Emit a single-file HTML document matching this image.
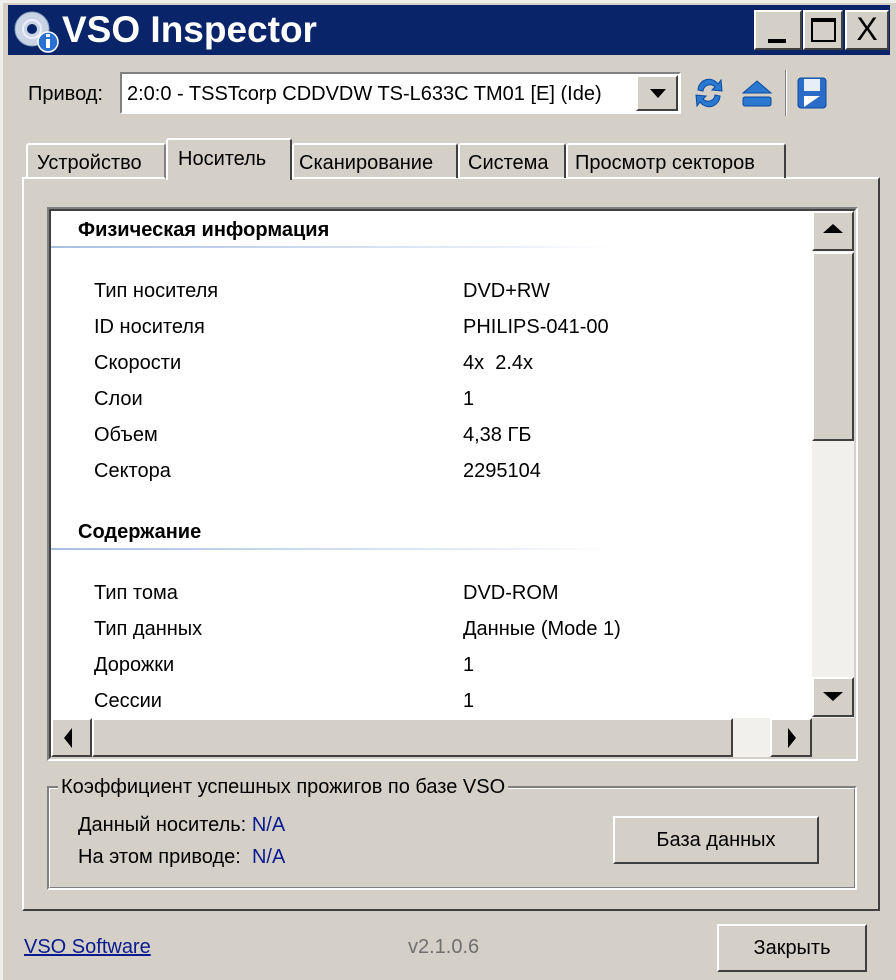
<!DOCTYPE html>
<html><head><meta charset="utf-8"><style>
*{margin:0;padding:0;box-sizing:border-box}
body{width:896px;height:980px;background:#d4d0c8;position:relative;overflow:hidden;font-family:"Liberation Sans",sans-serif;font-size:20px;color:#000}
.a{position:absolute;white-space:nowrap}
.rz{border:2px solid;border-color:#fff #404040 #404040 #fff;background:#d4d0c8}
.sk{border:2px solid;border-color:#808080 #fff #fff #808080}
</style></head><body>
<div class="a" style="left:0;top:0;width:896px;height:980px;border-left:3px solid #f0eee8;border-top:3px solid #f0eee8"></div>
<div class="a" style="left:8px;top:5px;width:882px;height:50px;background:#0a246a"></div>
<svg class="a" style="left:10px;top:8px" width="50" height="46" viewBox="0 0 50 46">
<circle cx="22" cy="21" r="17" fill="#c8d4e4" stroke="#8aa0c0"/><circle cx="22" cy="21" r="5" fill="#0a246a"/><circle cx="22" cy="21" r="9" fill="none" stroke="#eef" stroke-width="2"/>
<circle cx="38" cy="34" r="10" fill="#2a70d0" stroke="#fff" stroke-width="1.5"/><rect x="36" y="31" width="4" height="9" fill="#fff"/><rect x="36" y="26" width="4" height="3" fill="#fff"/></svg>
<div class="a" style="left:62px;top:8px;color:#fff;font-weight:bold;font-size:37px;line-height:44px">VSO Inspector</div>
<div class="a rz" style="left:754px;top:10px;width:48px;height:40px"><div class="a" style="left:12px;top:27px;width:18px;height:4px;background:#000"></div></div>
<div class="a rz" style="left:803px;top:10px;width:40px;height:40px"><div class="a" style="left:6px;top:6px;width:25px;height:24px;border:2px solid #000;border-top-width:4px"></div></div>
<div class="a rz" style="left:845px;top:10px;width:44px;height:40px;font-size:32px;line-height:34px;text-align:center">X</div>
<div class="a" style="left:28px;top:82px;line-height:24px">Привод:</div>
<div class="a sk" style="left:120px;top:72px;width:561px;height:42px;background:#fff"></div>
<div class="a" style="left:127px;top:82px;line-height:24px">2:0:0 - TSSTcorp CDDVDW TS-L633C TM01 [E] (Ide)</div>
<div class="a rz" style="left:636px;top:75px;width:42px;height:36px"><div class="a" style="left:12px;top:12px;border-left:8px solid transparent;border-right:8px solid transparent;border-top:9px solid #000"></div></div>
<svg class="a" style="left:692px;top:74px" width="34" height="38" viewBox="0 0 34 38"><path d="M6 16 A11 11 0 0 1 26 10 L29 6 L30 17 L20 16 L23 13 A7 7 0 0 0 11 17Z" fill="#2a78d0" stroke="#0a4aa0"/><path d="M28 22 A11 11 0 0 1 8 28 L5 32 L4 21 L14 22 L11 25 A7 7 0 0 0 23 21Z" fill="#2a78d0" stroke="#0a4aa0"/></svg>
<svg class="a" style="left:740px;top:78px" width="34" height="32" viewBox="0 0 34 32"><path d="M3 15 L17 3 L31 15Z" fill="#2a78d0" stroke="#0a4aa0"/><rect x="3" y="19" width="28" height="9" rx="2" fill="#2a78d0" stroke="#0a4aa0"/></svg>
<div class="a" style="left:785px;top:70px;width:2px;height:46px;background:#808080;border-right:1px solid #fff"></div>
<svg class="a" style="left:796px;top:76px" width="32" height="34" viewBox="0 0 32 34"><rect x="2" y="2" width="28" height="30" rx="3" fill="#2a6cc8" stroke="#0a4aa0"/><rect x="8" y="3" width="16" height="12" fill="#e8eef8"/><rect x="8" y="20" width="16" height="11" fill="#fff"/><path d="M8 31 L24 20 L24 31Z" fill="#2a6cc8"/></svg>
<div class="a" style="left:22px;top:177px;width:858px;height:734px;border:2px solid;border-color:#fff #404040 #404040 #fff"></div>
<div class="a" style="left:26px;top:143px;width:140px;height:36px;border:2px solid;border-color:#fff #808080 transparent #fff;border-radius:3px 3px 0 0"></div>
<div class="a" style="left:37px;top:152px">Устройство</div>
<div class="a" style="left:166px;top:138px;width:126px;height:42px;border:2px solid;border-color:#fff #404040 transparent #fff;border-bottom:none;background:#d4d0c8;border-radius:3px 3px 0 0"></div>
<div class="a" style="left:178px;top:148px">Носитель</div>
<div class="a" style="left:292px;top:143px;width:166px;height:35px;border:2px solid;border-color:#fff #404040 transparent #fff;border-bottom:none;border-radius:3px 3px 0 0"></div>
<div class="a" style="left:299px;top:152px">Сканирование</div>
<div class="a" style="left:458px;top:143px;width:108px;height:35px;border:2px solid;border-color:#fff #404040 transparent #fff;border-bottom:none;border-radius:3px 3px 0 0"></div>
<div class="a" style="left:468px;top:152px">Система</div>
<div class="a" style="left:566px;top:143px;width:220px;height:35px;border:2px solid;border-color:#fff #404040 transparent #fff;border-bottom:none;border-radius:3px 3px 0 0"></div>
<div class="a" style="left:575px;top:152px">Просмотр секторов</div>
<div class="a" style="left:47px;top:207px;width:811px;height:554px;border:2px solid;border-color:#808080 #fff #fff #808080"></div>
<div class="a" style="left:49px;top:209px;width:807px;height:550px;border:2px solid;border-color:#404040 #d4d0c8 #d4d0c8 #404040;background:#fff"></div>
<div class="a" style="left:78px;top:219px;font-weight:bold">Физическая информация</div>
<div class="a" style="left:51px;top:246px;width:560px;height:2px;background:linear-gradient(90deg,#a8c0e0,#e8eef8 80%,#fff)"></div>
<div class="a" style="left:94px;top:273px;line-height:36px">Тип носителя<br>ID носителя<br>Скорости<br>Слои<br>Объем<br>Сектора</div>
<div class="a" style="left:463px;top:273px;line-height:36px">DVD+RW<br>PHILIPS-041-00<br>4x&nbsp; 2.4x<br>1<br>4,38 ГБ<br>2295104</div>
<div class="a" style="left:78px;top:521px;font-weight:bold">Содержание</div>
<div class="a" style="left:51px;top:548px;width:560px;height:2px;background:linear-gradient(90deg,#a8c0e0,#e8eef8 80%,#fff)"></div>
<div class="a" style="left:94px;top:575px;line-height:36px">Тип тома<br>Тип данных<br>Дорожки<br>Сессии</div>
<div class="a" style="left:463px;top:575px;line-height:36px">DVD-ROM<br>Данные (Mode 1)<br>1<br>1</div>
<div class="a" style="left:812px;top:211px;width:42px;height:508px;background:#f2f0ec"></div>
<div class="a rz" style="left:812px;top:211px;width:42px;height:40px"><div class="a" style="left:9px;top:11px;border-left:10px solid transparent;border-right:10px solid transparent;border-bottom:9px solid #000"></div></div>
<div class="a rz" style="left:812px;top:252px;width:42px;height:189px"></div>
<div class="a rz" style="left:812px;top:677px;width:42px;height:40px"><div class="a" style="left:9px;top:13px;border-left:10px solid transparent;border-right:10px solid transparent;border-top:9px solid #000"></div></div>
<div class="a" style="left:51px;top:718px;width:761px;height:39px;background:#f2f0ec"></div>
<div class="a rz" style="left:51px;top:718px;width:41px;height:39px"><div class="a" style="left:11px;top:8px;border-top:10px solid transparent;border-bottom:10px solid transparent;border-right:8px solid #000"></div></div>
<div class="a rz" style="left:92px;top:718px;width:641px;height:39px"></div>
<div class="a rz" style="left:770px;top:718px;width:42px;height:39px"><div class="a" style="left:16px;top:8px;border-top:10px solid transparent;border-bottom:10px solid transparent;border-left:8px solid #000"></div></div>
<div class="a" style="left:812px;top:718px;width:42px;height:39px;background:#d4d0c8"></div>
<div class="a" style="left:47px;top:786px;width:810px;height:104px;border:2px solid;border-color:#808080 #fff #fff #808080"></div>
<div class="a" style="left:49px;top:788px;width:806px;height:100px;border:1px solid;border-color:#fff #808080 #808080 #fff"></div>
<div class="a" style="left:58px;top:776px;background:#d4d0c8;padding:0 3px">Коэффициент успешных прожигов по базе VSO</div>
<div class="a" style="left:78px;top:814px">Данный носитель: <span style="color:#0a1a90">N/A</span></div>
<div class="a" style="left:78px;top:846px">На этом приводе:&nbsp; <span style="color:#0a1a90">N/A</span></div>
<div class="a" style="left:613px;top:816px;width:206px;height:48px;border:2px solid;border-color:#fff #404040 #404040 #fff;text-align:center;line-height:44px">База данных</div>
<div class="a" style="left:24px;top:936px;color:#0a1a90;text-decoration:underline">VSO Software</div>
<div class="a" style="left:408px;top:936px;color:#707070">v2.1.0.6</div>
<div class="a" style="left:717px;top:924px;width:150px;height:48px;border:2px solid;border-color:#fff #404040 #404040 #fff;text-align:center;line-height:44px">Закрыть</div>
</body></html>
